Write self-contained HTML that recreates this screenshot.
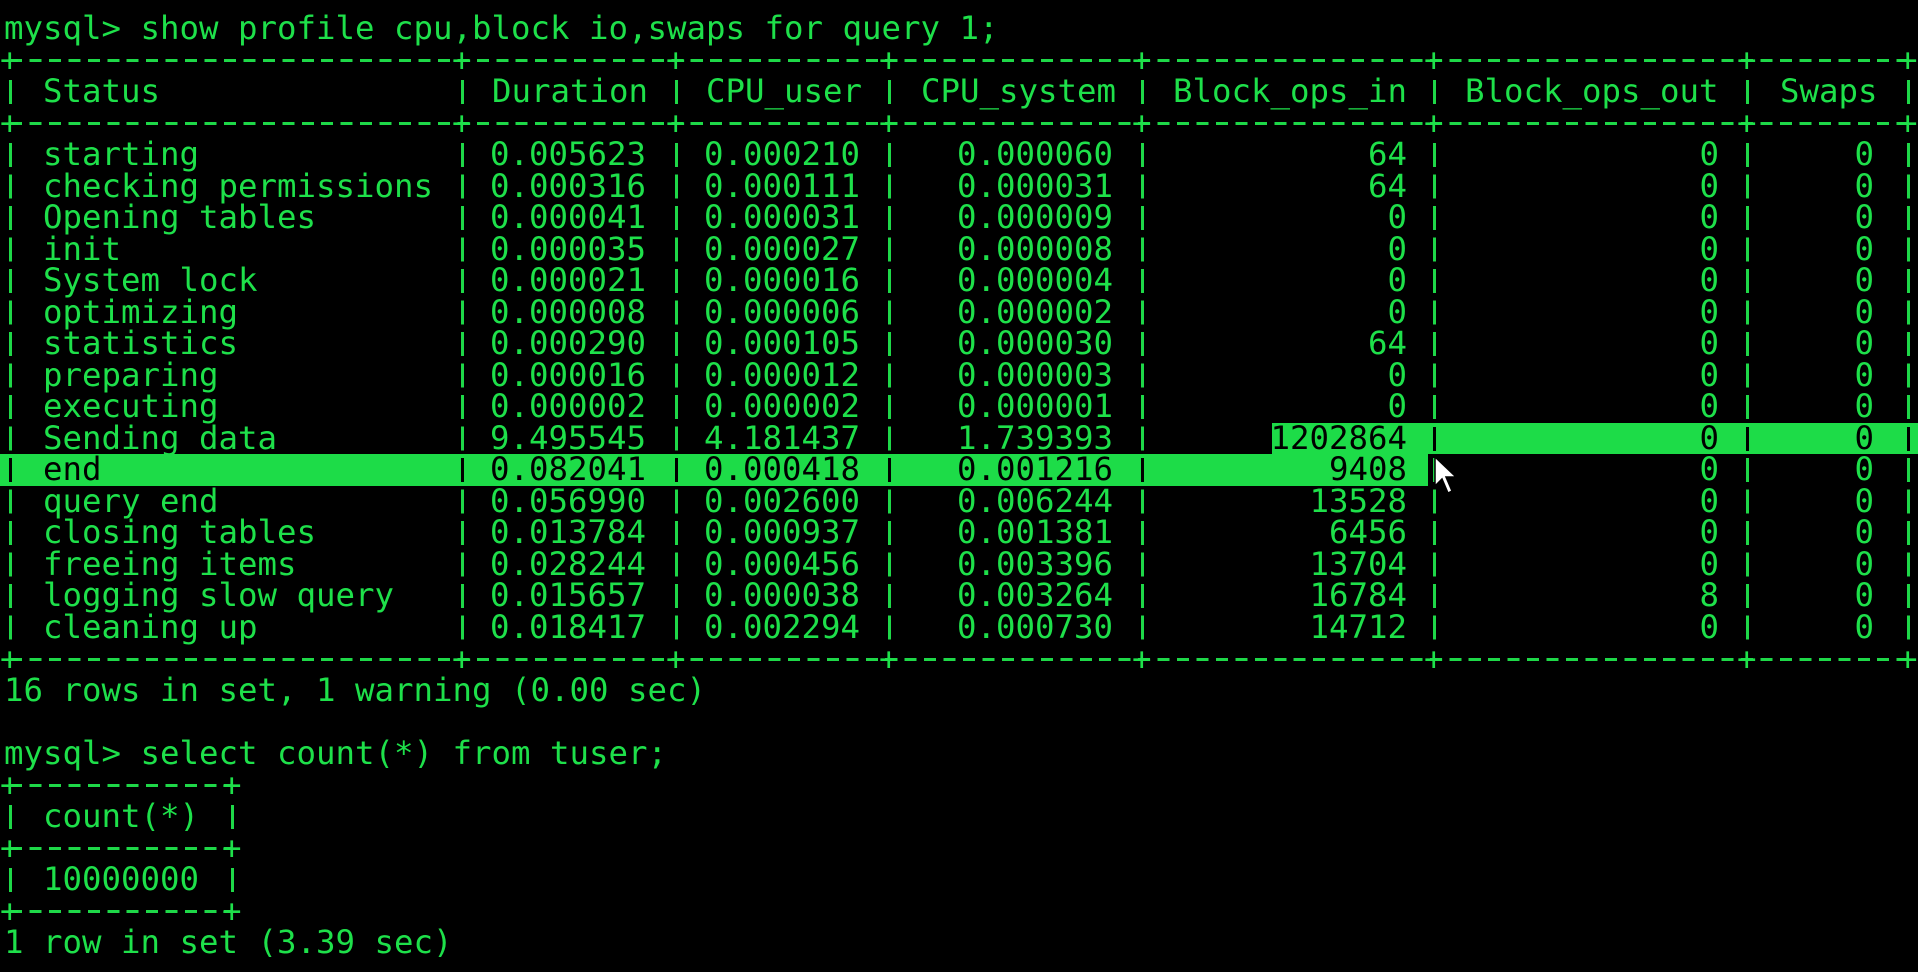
<!DOCTYPE html>
<html><head><meta charset="utf-8"><style>
html,body{margin:0;padding:0;background:#000;}
body{width:1918px;height:972px;position:relative;overflow:hidden;font-family:"DejaVu Sans Mono","Liberation Mono",monospace;font-size:32.4px;color:#1ee04a;}
#w{position:absolute;left:0;top:2px;width:1918px;height:970px;}
.l{position:absolute;left:0;width:1918px;height:31.5px;line-height:31.5px;white-space:pre;}
.l span{position:absolute;top:0;}
.s{left:43px}
.d{right:1272px}.u{right:1058px}.y{right:805px}.bi{right:511px}.bo{right:199px}.sw{right:44px}
.b{position:absolute;height:3px;top:14px;background:repeating-linear-gradient(90deg,#1ed848 0 12px,transparent 12px 19.45px);}
.p{position:absolute;width:3px;background:repeating-linear-gradient(180deg,transparent 0 4px,#1ed848 4px 28px,transparent 28px 31.5px);}
.pl{position:absolute;top:0;width:3px;height:31.5px;background:linear-gradient(180deg,transparent 0 4px,#000 4px 28px,transparent 28px);}
.hl{position:absolute;background:#1ddc48;height:31.5px;}
.k{color:#000;}
</style></head><body><div id="w">

<div class="l" style="top:11px;left:4px">mysql&gt; show profile cpu,block io,swaps for query 1;</div>

<div class="l" style="top:42.6px"><div class="b" style="left:10px;width:1898px"></div>
<span style="left:0">+</span><span style="left:452px">+</span><span style="left:666px">+</span><span style="left:879px">+</span><span style="left:1132px">+</span><span style="left:1424px">+</span><span style="left:1737px">+</span><span style="left:1898px">+</span></div>
<div class="l" style="top:105.6px"><div class="b" style="left:10px;width:1898px"></div>
<span style="left:0">+</span><span style="left:452px">+</span><span style="left:666px">+</span><span style="left:879px">+</span><span style="left:1132px">+</span><span style="left:1424px">+</span><span style="left:1737px">+</span><span style="left:1898px">+</span></div>
<div class="l" style="top:641.6px"><div class="b" style="left:10px;width:1898px"></div>
<span style="left:0">+</span><span style="left:452px">+</span><span style="left:666px">+</span><span style="left:879px">+</span><span style="left:1132px">+</span><span style="left:1424px">+</span><span style="left:1737px">+</span><span style="left:1898px">+</span></div>

<div class="p" style="left:9px;top:74px;height:31.5px"></div>
<div class="p" style="left:461px;top:74px;height:31.5px"></div>
<div class="p" style="left:675px;top:74px;height:31.5px"></div>
<div class="p" style="left:888px;top:74px;height:31.5px"></div>
<div class="p" style="left:1141px;top:74px;height:31.5px"></div>
<div class="p" style="left:1433px;top:74px;height:31.5px"></div>
<div class="p" style="left:1746px;top:74px;height:31.5px"></div>
<div class="p" style="left:1907px;top:74px;height:31.5px"></div>
<div class="p" style="left:9px;top:137.15px;height:504px"></div>
<div class="p" style="left:461px;top:137.15px;height:504px"></div>
<div class="p" style="left:675px;top:137.15px;height:504px"></div>
<div class="p" style="left:888px;top:137.15px;height:504px"></div>
<div class="p" style="left:1141px;top:137.15px;height:504px"></div>
<div class="p" style="left:1433px;top:137.15px;height:504px"></div>
<div class="p" style="left:1746px;top:137.15px;height:504px"></div>
<div class="p" style="left:1907px;top:137.15px;height:504px"></div>

<div class="l" style="top:74.15px"><span class="s">Status</span><span style="left:492px">Duration</span><span style="left:706px">CPU_user</span><span style="left:921px">CPU_system</span><span style="left:1173px">Block_ops_in</span><span style="left:1465px">Block_ops_out</span><span style="left:1780px">Swaps</span></div>

<div class="l" style="top:137.15px"><span class="s">starting</span><span class="d">0.005623</span><span class="u">0.000210</span><span class="y">0.000060</span><span class="bi">64</span><span class="bo">0</span><span class="sw">0</span></div>
<div class="l" style="top:168.65px"><span class="s">checking permissions</span><span class="d">0.000316</span><span class="u">0.000111</span><span class="y">0.000031</span><span class="bi">64</span><span class="bo">0</span><span class="sw">0</span></div>
<div class="l" style="top:200.15px"><span class="s">Opening tables</span><span class="d">0.000041</span><span class="u">0.000031</span><span class="y">0.000009</span><span class="bi">0</span><span class="bo">0</span><span class="sw">0</span></div>
<div class="l" style="top:231.65px"><span class="s">init</span><span class="d">0.000035</span><span class="u">0.000027</span><span class="y">0.000008</span><span class="bi">0</span><span class="bo">0</span><span class="sw">0</span></div>
<div class="l" style="top:263.15px"><span class="s">System lock</span><span class="d">0.000021</span><span class="u">0.000016</span><span class="y">0.000004</span><span class="bi">0</span><span class="bo">0</span><span class="sw">0</span></div>
<div class="l" style="top:294.65px"><span class="s">optimizing</span><span class="d">0.000008</span><span class="u">0.000006</span><span class="y">0.000002</span><span class="bi">0</span><span class="bo">0</span><span class="sw">0</span></div>
<div class="l" style="top:326.15px"><span class="s">statistics</span><span class="d">0.000290</span><span class="u">0.000105</span><span class="y">0.000030</span><span class="bi">64</span><span class="bo">0</span><span class="sw">0</span></div>
<div class="l" style="top:357.65px"><span class="s">preparing</span><span class="d">0.000016</span><span class="u">0.000012</span><span class="y">0.000003</span><span class="bi">0</span><span class="bo">0</span><span class="sw">0</span></div>
<div class="l" style="top:389.15px"><span class="s">executing</span><span class="d">0.000002</span><span class="u">0.000002</span><span class="y">0.000001</span><span class="bi">0</span><span class="bo">0</span><span class="sw">0</span></div>
<div class="l" style="top:420.65px"><div class="hl" style="left:1272px;width:646px"></div><div class="pl" style="left:1433px"></div><div class="pl" style="left:1746px"></div><div class="pl" style="left:1907px"></div><span class="s">Sending data</span><span class="d">9.495545</span><span class="u">4.181437</span><span class="y">1.739393</span><span class="bi k">1202864</span><span class="bo k">0</span><span class="sw k">0</span></div>
<div class="l" style="top:452.15px"><div class="hl" style="left:0;width:1428px"></div><div class="pl" style="left:9px"></div><div class="pl" style="left:461px"></div><div class="pl" style="left:675px"></div><div class="pl" style="left:888px"></div><div class="pl" style="left:1141px"></div><span class="s k">end</span><span class="d k">0.082041</span><span class="u k">0.000418</span><span class="y k">0.001216</span><span class="bi k">9408</span><span class="bo">0</span><span class="sw">0</span></div>
<div class="l" style="top:483.65px"><span class="s">query end</span><span class="d">0.056990</span><span class="u">0.002600</span><span class="y">0.006244</span><span class="bi">13528</span><span class="bo">0</span><span class="sw">0</span></div>
<div class="l" style="top:515.15px"><span class="s">closing tables</span><span class="d">0.013784</span><span class="u">0.000937</span><span class="y">0.001381</span><span class="bi">6456</span><span class="bo">0</span><span class="sw">0</span></div>
<div class="l" style="top:546.65px"><span class="s">freeing items</span><span class="d">0.028244</span><span class="u">0.000456</span><span class="y">0.003396</span><span class="bi">13704</span><span class="bo">0</span><span class="sw">0</span></div>
<div class="l" style="top:578.15px"><span class="s">logging slow query</span><span class="d">0.015657</span><span class="u">0.000038</span><span class="y">0.003264</span><span class="bi">16784</span><span class="bo">8</span><span class="sw">0</span></div>
<div class="l" style="top:609.65px"><span class="s">cleaning up</span><span class="d">0.018417</span><span class="u">0.002294</span><span class="y">0.000730</span><span class="bi">14712</span><span class="bo">0</span><span class="sw">0</span></div>

<div class="l" style="top:673.15px;left:4px">16 rows in set, 1 warning (0.00 sec)</div>
<div class="l" style="top:735.65px;left:4px">mysql&gt; select count(*) from tuser;</div>

<div class="l" style="top:767.65px"><div class="b" style="left:10px;width:222px"></div><span style="left:0">+</span><span style="left:222px">+</span></div>
<div class="l" style="top:799.15px"><div class="pl" style="left:9px;background:linear-gradient(180deg,transparent 0 4px,#1ed848 4px 28px,transparent 28px)"></div><div class="pl" style="left:231px;background:linear-gradient(180deg,transparent 0 4px,#1ed848 4px 28px,transparent 28px)"></div><span class="s">count(*)</span></div>
<div class="l" style="top:830.65px"><div class="b" style="left:10px;width:222px"></div><span style="left:0">+</span><span style="left:222px">+</span></div>
<div class="l" style="top:862.15px"><div class="pl" style="left:9px;background:linear-gradient(180deg,transparent 0 4px,#1ed848 4px 28px,transparent 28px)"></div><div class="pl" style="left:231px;background:linear-gradient(180deg,transparent 0 4px,#1ed848 4px 28px,transparent 28px)"></div><span class="s">10000000</span></div>
<div class="l" style="top:893.65px"><div class="b" style="left:10px;width:222px"></div><span style="left:0">+</span><span style="left:222px">+</span></div>
<div class="l" style="top:925.15px;left:4px">1 row in set (3.39 sec)</div>

</div>
<svg style="position:absolute;left:1434px;top:456px" width="26" height="42" viewBox="0 0 26 42"><path d="M1 1 L1 30 L8 23 L14 37 L18 35 L12 21 L22 21 Z" fill="#fff" stroke="#000" stroke-width="1.5"/></svg>
</body></html>
